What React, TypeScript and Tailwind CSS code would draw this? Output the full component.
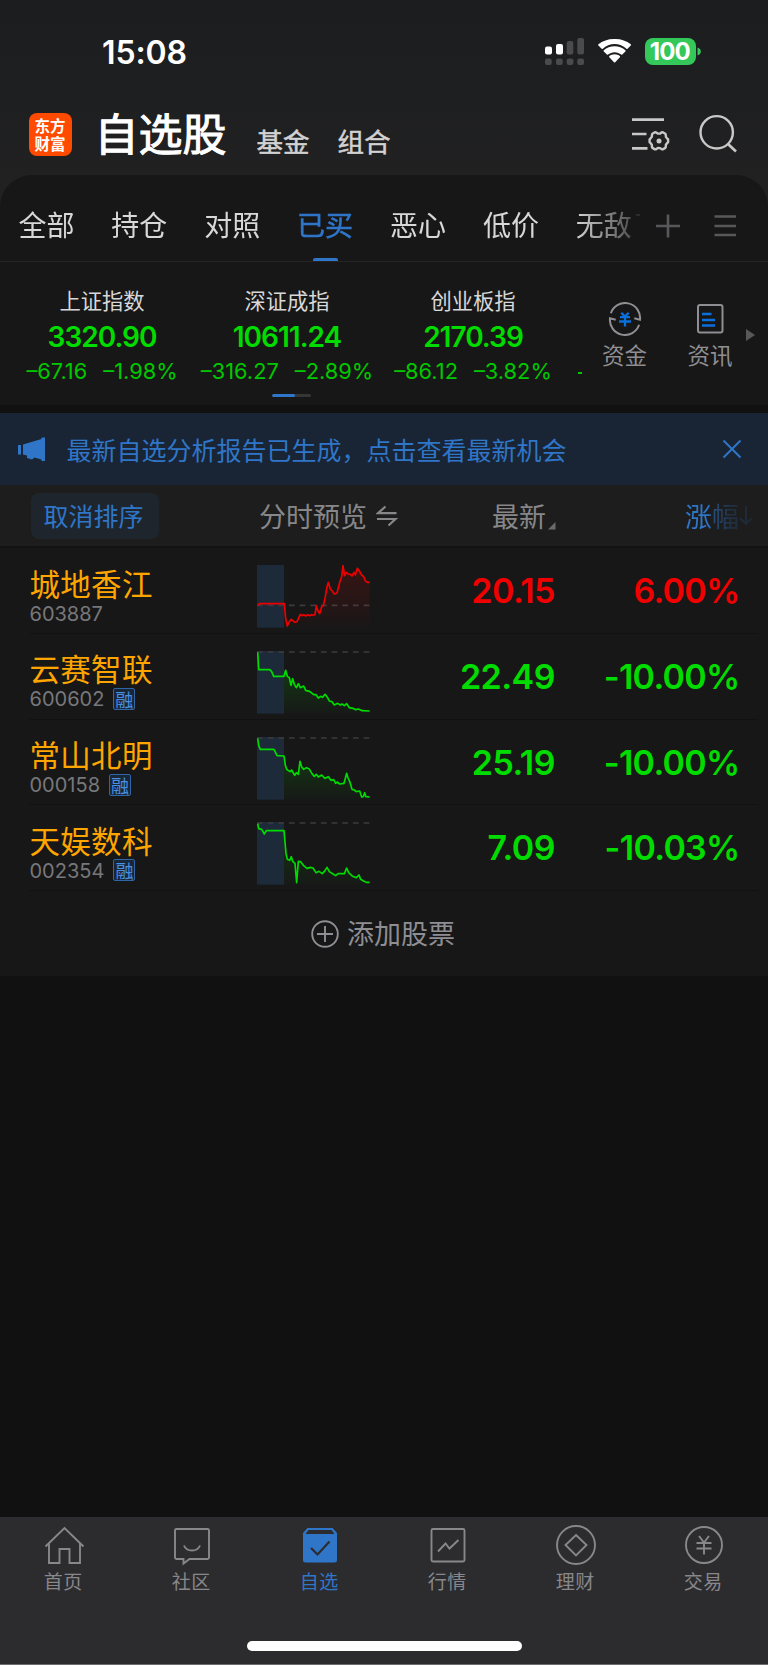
import React from "react";

const CJK = "font-['Noto_Sans_CJK_SC',sans-serif]";

const tabs = ["全部", "持仓", "对照", "已买", "恶心", "低价", "无敌"];

const indices = [
  { name: "上证指数", value: "3320.90", diff: "–67.16", pct: "–1.98%" },
  { name: "深证成指", value: "10611.24", diff: "–316.27", pct: "–2.89%" },
  { name: "创业板指", value: "2170.39", diff: "–86.12", pct: "–3.82%" },
];

type Stock = {
  name: string;
  code: string;
  margin: boolean;
  price: string;
  pct: string;
  up: boolean;
  base: number;
  points: string;
};

const stocks: Stock[] = [
  {
    name: "城地香江", code: "603887", margin: false, price: "20.15", pct: "6.00%", up: true, base: 121,
    points:
      "2,120 8,116 82,116 86,160 91,183 97,170 103,163 114,172 120,170 130,148 135,152 140,149 146,153 152,149 158,152 164,149 170,151 174,148 178,122 183,138 188,146 194,125 199,122 205,95 209,70 214,52 220,72 226,78 232,87 240,84 248,52 254,35 258,2 263,32 268,22 274,27 280,28 285,33 291,22 295,30 301,10 307,18 314,30 320,35 325,47 331,52 338,52",
  },
  {
    name: "云赛智联", code: "600602", margin: true, price: "22.49", pct: "-10.00%", up: false, base: 3,
    points:
      "2,4 5,56 38,56 44,62 50,76 81,76 86,58 91,76 97,80 102,103 107,83 112,100 118,110 124,98 130,110 140,105 146,118 158,121 170,131 177,131 184,141 191,136 197,139 204,130 212,140 217,150 225,152 232,162 242,157 250,162 255,159 262,164 269,158 277,170 288,172 296,176 305,174 315,179 338,180",
  },
  {
    name: "常山北明", code: "000158", margin: true, price: "25.19", pct: "-10.00%", up: false, base: 3,
    points:
      "2,4 5,25 10,37 50,37 54,43 60,56 81,57 85,85 89,97 99,104 104,99 113,115 118,107 124,112 129,73 134,90 140,97 148,92 156,95 165,110 172,118 178,112 184,120 194,114 204,124 214,119 222,130 230,128 236,139 241,135 248,141 261,139 269,109 273,123 278,133 285,157 292,159 298,164 308,162 314,180 319,179 323,167 327,179 338,180",
  },
  {
    name: "天娱数科", code: "002354", margin: true, price: "7.09", pct: "-10.03%", up: false, base: 3,
    points:
      "2,5 5,20 14,22 22,36 28,26 81,26 84,60 87,95 91,112 98,115 103,104 107,118 114,124 119,182 124,118 131,119 140,131 150,139 160,136 168,138 177,152 186,148 196,155 204,146 210,136 217,149 228,156 236,161 243,155 262,155 269,138 275,152 287,163 298,167 306,159 311,172 321,178 328,181 338,181",
  },
];

function Sparkline({ stock }: { stock: Stock }) {
  const color = stock.up ? "#ee0000" : "#00dc00";
  const id = "fill-" + stock.code;
  const tail = stock.points.split(" ").filter((p) => Number(p.split(",")[0]) >= 81);
  return (
    <svg width="113" height="63" viewBox="0 0 339 189" className="block shrink-0">
      <defs>
        <linearGradient id={id} x1="0" y1="0" x2="0" y2="1">
          <stop offset="0" stopColor={color} stopOpacity="0.16" />
          <stop offset="1" stopColor={color} stopOpacity="0.01" />
        </linearGradient>
      </defs>
      <rect x="0" y="0" width="81" height="188" fill="#1c2a3a" />
      <path d={`M0 ${stock.base}H339`} stroke="#3c3c3e" strokeWidth="5" strokeDasharray="17 15" />
      <polygon points={`81,188 ${tail.join(" ")} 338,188`} fill={`url(#${id})`} />
      <polyline points={stock.points} fill="none" stroke={color} strokeWidth="5" strokeLinejoin="round" />
    </svg>
  );
}

function StatusBar() {
  return (
    <div className="flex h-[104px] shrink-0 items-center pl-[102px] text-white">
      <div className="mt-[2px] w-[442px] font-['Inter',sans-serif] text-[32px] leading-none font-semibold tracking-[-0.1px]">15:08</div>
      <svg width="157" height="30" viewBox="0 0 157 30" className="block">
        <rect x="1" y="9.5" width="7" height="8" rx="2" fill="#fff" />
        <rect x="12" y="7" width="7" height="10.5" rx="2" fill="#fff" />
        <rect x="22.7" y="4" width="6.6" height="13.5" rx="2" fill="#4b4b4d" />
        <rect x="33.3" y="1" width="6.7" height="16.5" rx="2" fill="#4b4b4d" />
        {[1, 12, 22.7, 33.3].map((x) => (
          <rect key={x} x={x} y="21.5" width="6.7" height="6.5" rx="2" fill="#4b4b4d" />
        ))}
        <g fill="#fff" transform="translate(53.6 2)">
          <path d="M17 5c4.500 0 8.700 1.800 11.800 4.700.3.300.8.300 1.100 0l3.300-3.100c.4-.4.4-1 0-1.300C28.900 1.900 23.100-.2 17 0 10.900-.2 5.100 1.900.8 5.300c-.4.300-.4.900 0 1.300l3.300 3.100c.3.300.8.300 1.100 0C8.300 6.800 12.500 5 17 5z" />
          <path d="M17 13.200c2.500 0 4.800.9 6.600 2.400.3.300.8.300 1.100 0l3.100-3.100c.4-.4.4-1 0-1.300-2.900-2.500-6.700-3.900-10.800-3.900S9.100 8.700 6.200 11.200c-.4.300-.4.900 0 1.300l3.100 3.100c.3.300.8.300 1.100 0 1.800-1.500 4.100-2.400 6.600-2.400z" />
          <path d="M22.300 18.300c.3-.3.300-.9 0-1.200-1.500-1.200-3.300-1.900-5.300-1.900s-3.800.7-5.300 1.900c-.3.300-.3.900 0 1.200l4.700 4.900c.3.300.9.300 1.200 0z" />
        </g>
        <rect x="101" y="1" width="51" height="27" rx="8" fill="#34c759" />
        <path d="M153.500 10.500c2.300.7 3.300 2.200 3.300 4s-1 3.300-3.300 4z" fill="#34c759" />
        <text x="126.300" y="23.200" textAnchor="middle" fill="#fff" fontFamily="Inter, sans-serif" fontWeight="700" fontSize="24" textLength="41">100</text>
      </svg>
    </div>
  );
}

function Header() {
  return (
    <div className={`flex h-[71px] shrink-0 items-start ${CJK}`}>
      <div className="mt-[8.500px] ml-[28.500px] flex h-[43px] w-[43px] flex-col items-center justify-center rounded-[8px] bg-[#ff4a00] pb-[1px] text-[15.500px] leading-[18px] font-bold text-white">
        <span>东方</span>
        <span>财富</span>
      </div>
      <div className="-mt-[1.500px] ml-[23px] w-[162px] text-[44px] leading-[58px] font-normal text-white [-webkit-text-stroke:1px_#fff]">自选股</div>
      <div className="mt-[18px] flex gap-[28px] text-[26.500px] leading-[38px] font-normal text-[#d2d2d2] [-webkit-text-stroke:0.5px_#d2d2d2]">
        <span>基金</span>
        <span>组合</span>
      </div>
      <svg width="110" height="42" viewBox="0 0 110 42" className="mt-[10px] ml-[240px] block" fill="none" stroke="#c8c8c8" strokeWidth="2.400">
        <path d="M1 5.700H33M1 20H15.500M1 34.300H16.500" strokeWidth="2.700" />
        <path d="M24 18.200h.7l2.100 1.400 2.400-.1 1.700-1.300h.8l2.600 1.500.4.800.2 2.300 1.300 1.800.9.700v3l-.9.700-1.300 1.800-.2 2.300-.4.800-2.600 1.500h-.8l-1.700-1.300-2.400-.1-2.100 1.400H24l-2.600-1.500-.4-.8-.2-2.300-1.400-1.900-.8-.6v-3l.8-.7 1.400-1.800.2-2.300.4-.8z" strokeLinejoin="round" />
        <circle cx="28" cy="27" r="2.500" fill="#c8c8c8" stroke="none" />
        <circle cx="85.700" cy="18.300" r="16.200" />
        <path d="M97 30L105 37.500" strokeWidth="2.700" />
      </svg>
    </div>
  );
}

function TabBar() {
  return (
    <div className={`flex h-[87px] shrink-0 border-b border-[#252526] ${CJK}`}>
      <div className="flex w-[642px] overflow-hidden [mask-image:linear-gradient(to_right,#000_575px,transparent_655px)]">
        {tabs.map((t) => (
          <div key={t} className="flex w-[92.900px] shrink-0 flex-col items-center">
            <div
              className={
                t === "已买"
                  ? "mt-[29px] text-[28px] leading-[40px] font-normal text-[#2f76c9] [-webkit-text-stroke:0.5px_#2f76c9]"
                  : "mt-[29px] text-[28px] leading-[40px] font-normal text-[#d8d8d8]"
              }
            >
              {t}
            </div>
            {t === "已买" && <div className="mt-[14px] h-[4px] w-[25px] rounded-t-[2px] bg-[#2f76c9]" />}
          </div>
        ))}
      </div>
      <svg width="100" height="30" viewBox="0 0 100 30" className="mt-[36px] block" stroke="#58585a" strokeWidth="2.600">
        <path d="M14 15H38M26 3.500V26.500M72.500 5.500H94M72.500 15H94M72.500 24H94" />
      </svg>
      <div className="mt-[39px] -ml-[106px] h-[2px] w-[4px] bg-[#2c2c2c]" />
    </div>
  );
}

function Indices() {
  return (
    <div className="flex h-[143px] shrink-0">
      <div className="relative flex w-[584px] overflow-hidden">
        {indices.map((it) => (
          <div key={it.name} className="flex w-[186px] shrink-0 flex-col items-center first:-mr-[1px] first:ml-[9px]">
            <div className={`mt-[23px] text-[21.300px] leading-[30px] text-[#d8d8d8] ${CJK}`}>{it.name}</div>
            <div className="mt-[5px] font-['Inter',sans-serif] text-[28px] leading-[34px] font-semibold tracking-[-1px] text-[#00dc00]">{it.value}</div>
            <div className="mt-[3px] flex gap-[16px] font-['Inter',sans-serif] text-[21.800px] leading-[28px] whitespace-nowrap text-[#00c800]">
              <span>{it.diff}</span>
              <span>{it.pct}</span>
            </div>
          </div>
        ))}
        <div className="mt-[110px] ml-[12px] h-[2px] w-[4px] shrink-0 bg-[#00c800]" />
        <div className="absolute top-[132px] left-[271.500px] flex h-[3px] w-[39px] overflow-hidden rounded-full bg-[#363638]">
          <div className="w-[23px] rounded-full bg-[#2f76c9]" />
        </div>
      </div>
      <div className={`flex text-[22.500px] leading-[32px] text-[#8e8e93] ${CJK}`}>
        <div className="ml-[0.500px] flex w-[80px] flex-col items-center pt-[40px]">
          <svg width="34" height="34" viewBox="0 0 34 34" fill="none" stroke="#8e8e93" strokeWidth="2">
            <path d="M2.900 11.200A15 15 0 0 1 32 17.800L26.300 16.300" />
            <path d="M31.100 22.800A15 15 0 0 1 2 16.200L7.700 17.700" />
            <path d="M13.300 10.700L17 14.500L20.700 10.700M12 15.200H22M11 19.500H23M17 14.500V24.500" stroke="#0b6fdc" strokeWidth="2.300" />
          </svg>
          <div className="mt-[2px]">资金</div>
        </div>
        <div className="ml-[5.500px] flex w-[80px] flex-col items-center pt-[40px]">
          <svg width="34" height="34" viewBox="0 0 34 34" fill="none" stroke="#8e8e93" strokeWidth="2">
            <rect x="5" y="3" width="24.500" height="27.500" rx="2" />
            <path d="M9 12H18.500M9 18H22M9 23.500H22" stroke="#0b6fdc" strokeWidth="2.300" />
          </svg>
          <div className="mt-[2px]">资讯</div>
        </div>
        <svg width="10" height="12" viewBox="0 0 10 12" className="mt-[67px] -ml-[4px]">
          <path d="M0 0L9 6L0 12Z" fill="#58585a" />
        </svg>
      </div>
    </div>
  );
}

function Banner() {
  return (
    <div className={`flex h-[72px] shrink-0 items-center bg-[#192534] ${CJK}`}>
      <svg width="30" height="26" viewBox="0 0 30 26" className="ml-[17px] block" fill="#2f76c9">
        <path d="M1 9h3v9.500H1zM6 8.500L24.500 3V1.500H28V25H24.500V23.500L17.500 21.500L15 23.500L10 22V19.500L6 18.500Z" />
      </svg>
      <div className="mb-[1px] ml-[19.500px] w-[655px] text-[25px] leading-[36px] text-[#2f76c9]">最新自选分析报告已生成，点击查看最新机会</div>
      <svg width="20" height="20" viewBox="0 0 20 20" className="block" stroke="#2f76c9" strokeWidth="2">
        <path d="M1.500 1.500L18.500 18.500M18.500 1.500L1.500 18.500" />
      </svg>
    </div>
  );
}

function ColumnHeads() {
  return (
    <div className={`flex h-[63px] shrink-0 items-center border-b-2 border-[#131313] bg-[#1d1d1d] ${CJK}`}>
      <div className="ml-[31px] flex h-[46px] w-[128px] items-center justify-center rounded-[8px] bg-[#1e252d] pr-[3px] pb-[2px] text-[25px] leading-[36px] text-[#2f76c9]">
        取消排序
      </div>
      <div className="ml-[100px] text-[27px] leading-[38px] text-[#87878a]">分时预览</div>
      <svg width="22" height="22" viewBox="0 0 22 22" className="ml-[9px] block" fill="none" stroke="#87878a" strokeWidth="2.200">
        <path d="M20.500 8.200H2L9.500 1.500M1 14H19.500L12.500 20.500" />
      </svg>
      <div className="ml-[94px] text-[27px] leading-[38px] text-[#87878a]">最新</div>
      <svg width="8" height="8" viewBox="0 0 8 8" className="mt-[21px] ml-[2px] block">
        <path d="M7.500 0V7.500H0Z" fill="#6a6a6c" />
      </svg>
      <div className="ml-[129px] flex w-[72px] items-center text-[27px] leading-[38px] text-[#2f76c9] [mask-image:linear-gradient(to_right,#000_22px,rgba(0,0,0,0.5)_30px,rgba(0,0,0,0.22)_46px,rgba(0,0,0,0.1)_72px)]">
        涨幅
        <svg width="14" height="22" viewBox="0 0 14 22" fill="none" stroke="#2f76c9" strokeWidth="2">
          <path d="M7 1V19M1 13L7 19L13 13" />
        </svg>
      </div>
    </div>
  );
}

function StockRow({ stock }: { stock: Stock }) {
  const tone = stock.up ? "text-[#f00000]" : "text-[#00dc00]";
  return (
    <div className="mr-[10px] ml-[29.500px] flex h-[85.750px] shrink-0 border-b border-[#111111]">
      <div className="w-[227.500px]">
        <div className={`mt-[15.500px] text-[30.500px] leading-[39px] tracking-[0.300px] text-[#ffa500] ${CJK}`}>{stock.name}</div>
        <div className="-mt-[1px] flex h-[24px] items-center">
          <span className="font-['Inter',sans-serif] text-[20px] leading-none text-[#77777c]">{stock.code}</span>
          {stock.margin && (
            <span className={`mb-[1px] ml-[9px] flex h-[22px] w-[22px] items-center justify-center rounded-[2px] border border-[#2f66a8] bg-[#182638] text-[18px] leading-none text-[#4a90e0] ${CJK}`}>
              融
            </span>
          )}
        </div>
      </div>
      <div className="mt-[17px] w-[113px]">
        <Sparkline stock={stock} />
      </div>
      <div className={`mt-[22px] w-[185px] text-right font-['Inter',sans-serif] text-[34px] leading-[42px] font-semibold tracking-[-0.500px] ${tone}`}>{stock.price}</div>
      <div className={`mt-[22px] w-[184.500px] text-right font-['Inter',sans-serif] text-[34px] leading-[42px] font-semibold tracking-[-0.700px] ${tone}`}>{stock.pct}</div>
    </div>
  );
}

function AddStock() {
  return (
    <div className={`flex h-[85px] shrink-0 items-center bg-[#171717] pl-[311px] text-[27px] leading-[38px] text-[#8e8e93] ${CJK}`}>
      <svg width="28" height="28" viewBox="0 0 28 28" fill="none" stroke="#8e8e93" strokeWidth="1.900">
        <circle cx="14" cy="14" r="12.800" />
        <path d="M6 14H22M14 6V22" />
      </svg>
      <span className="mb-[1px] ml-[8px]">添加股票</span>
    </div>
  );
}

const navItems: { label: string; active?: boolean; icon: React.ReactNode }[] = [
  { label: "首页", icon: <path d="M1.500 20.500L20.500 2L39.500 20.500M5 17.500V37H15.500V23H25.500V37H36V17.500" /> },
  {
    label: "社区",
    icon: <path d="M4.500 3H35.500Q37 3 37 4.500V31.500Q37 33 35.500 33H17.500L11.500 37.500V33H4.500Q3 33 3 31.500V4.500Q3 3 4.500 3ZM12 19.500Q14 24.500 20 24.500T28 19.500" />,
  },
  {
    label: "自选",
    active: true,
    icon: (
      <g stroke="none" fill="#2f76c9">
        <path fillRule="evenodd" d="M7.500 2H32.500L37 7V34Q37 36.500 34.500 36.500H5.500Q3 36.500 3 34V7ZM8.500 4L5.500 8H34.500L31.500 4Z" />
        <path d="M11 22L17.500 28.500L29.500 15.500" fill="none" stroke="#2c2c2e" strokeWidth="2.200" />
      </g>
    ),
  },
  { label: "行情", icon: <path d="M5 3H35Q36.500 3 36.500 4.500V34Q36.500 35.500 35 35.500H5Q3.500 35.500 3.500 34V4.500Q3.500 3 5 3ZM10 25.500L17.500 17.500L21.500 22.500L30.500 14" /> },
  {
    label: "理财",
    icon: (
      <>
        <circle cx="20" cy="19" r="19" />
        <path d="M20 9L30.500 19L20 29.500L9.500 19Z" />
      </>
    ),
  },
  {
    label: "交易",
    icon: (
      <>
        <circle cx="20" cy="19" r="18" />
        <path d="M15 10L20 16.500L25 10M12.500 17H27.500M12.500 22.500H27.500M20 16.500V28.500" />
      </>
    ),
  },
];

function BottomNav() {
  return (
    <div className="flex h-[148.500px] shrink-0 flex-col items-center border-b border-[#6d6d70] bg-[#2c2c2e]">
      <div className={`grid w-full grid-cols-6 text-[19px] leading-[28px] ${CJK}`}>
        {navItems.map((n) => (
          <div key={n.label} className={n.active ? "flex flex-col items-center pt-[9px] text-[#2f76c9]" : "flex flex-col items-center pt-[9px] text-[#87878c]"}>
            <svg width="40" height="40" viewBox="0 0 40 40" className="overflow-visible" fill="none" stroke="#87878c" strokeWidth="1.900">
              {n.icon}
            </svg>
            <div className="mt-[1px] -ml-[1.500px] tracking-[0.500px]">{n.label}</div>
          </div>
        ))}
      </div>
      <div className="mt-[46.500px] h-[10px] w-[275px] rounded-full bg-white" />
    </div>
  );
}

export default function App() {
  return (
    <div className="flex h-[1665px] w-[768px] flex-col overflow-hidden bg-[#111111]">
      <div className="flex h-[405px] shrink-0 flex-col bg-linear-to-b from-[#1c1d1f] from-0% via-[#212122] via-45% to-[#212122]">
        <StatusBar />
        <Header />
        <div className="flex flex-col rounded-t-[32px] bg-[#171717]">
          <TabBar />
          <Indices />
        </div>
      </div>
      <div className="h-[8px] shrink-0" />
      <Banner />
      <ColumnHeads />
      <div className="flex h-[343px] shrink-0 flex-col bg-[#171717]">
        {stocks.map((s) => (
          <StockRow key={s.code} stock={s} />
        ))}
      </div>
      <AddStock />
      <div className="grow" />
      <BottomNav />
    </div>
  );
}
